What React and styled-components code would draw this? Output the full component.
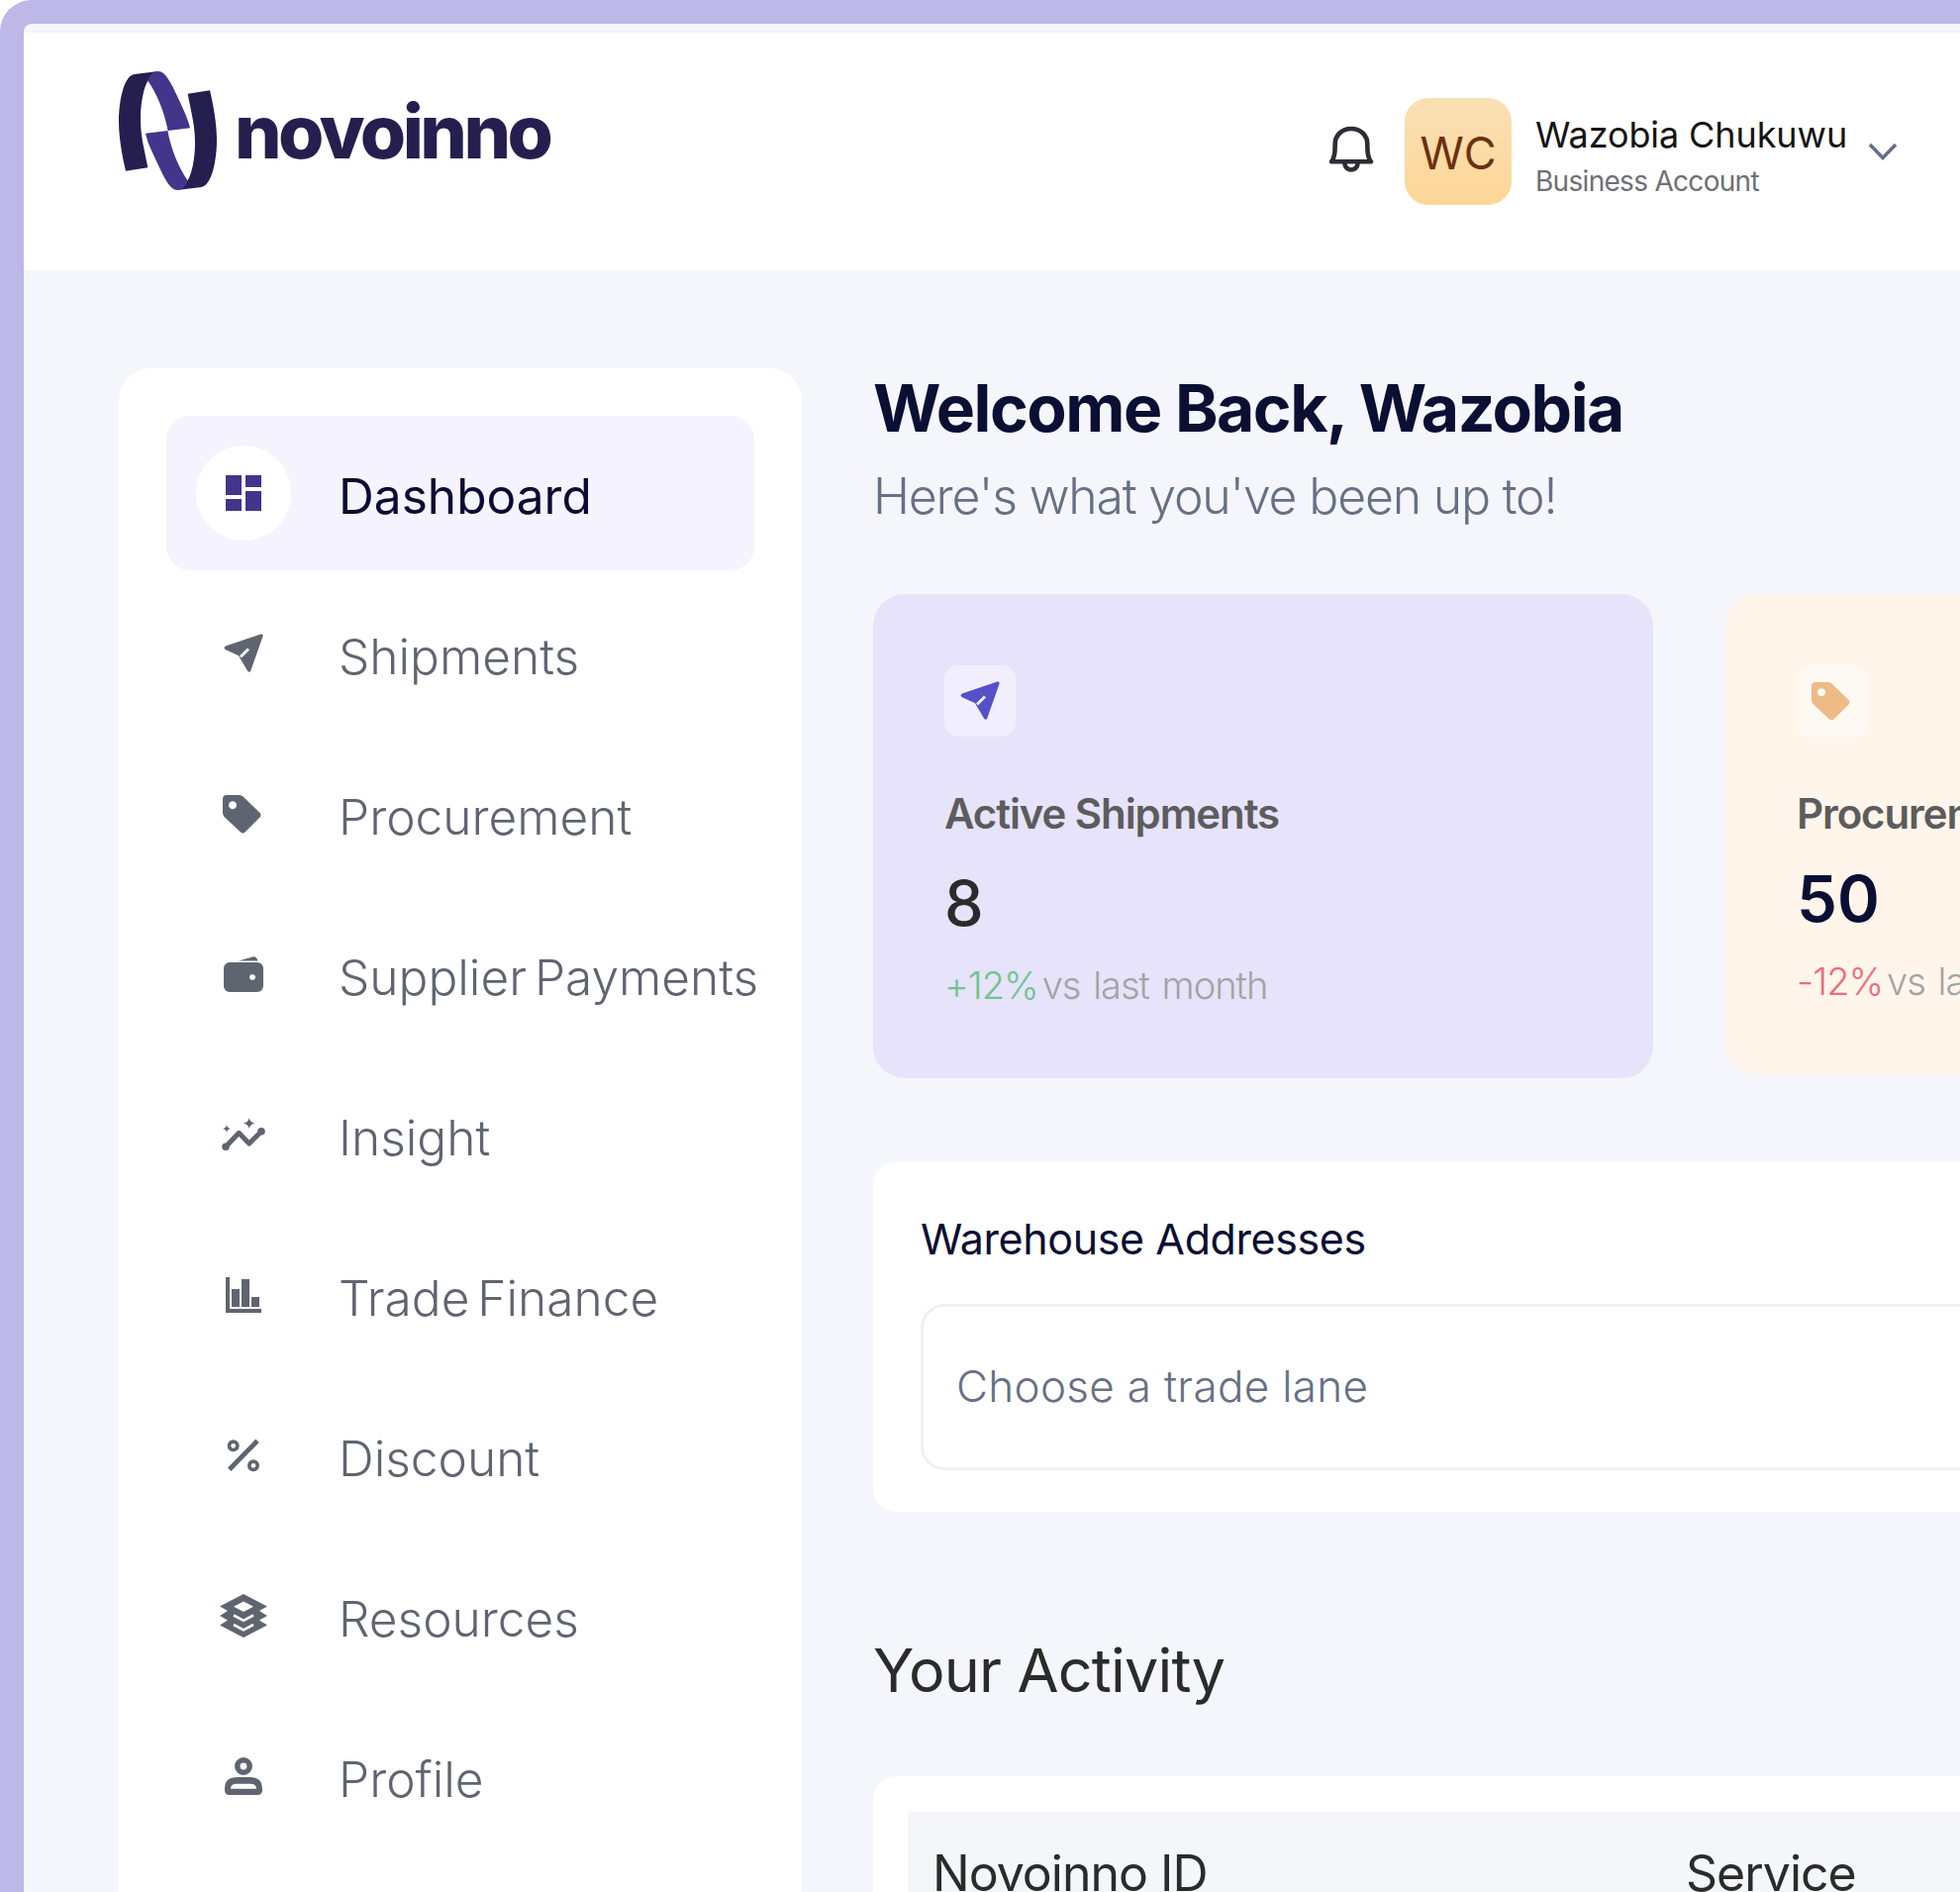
import React from "react";
import styled, { createGlobalStyle } from "styled-components";

const GlobalStyle = createGlobalStyle`
  html, body {
    margin: 0;
    padding: 0;
    background: #fff;
  }
  * { box-sizing: border-box; }
  body {
    font-family: Inter, "Noto Sans", "Liberation Sans", sans-serif;
  }
`;

const Frame = styled.div`
  width: 1980px;
  height: 1911px;
  overflow: hidden;
  background: #f4f6fb;
  border-top: 24px solid #bdb8e8;
  border-left: 24px solid #bdb8e8;
  border-top-left-radius: 32px;
  padding-top: 9px;
`;

const Header = styled.header`
  height: 240px;
  background: #fff;
  display: flex;
  align-items: flex-start;
  justify-content: space-between;
  padding: 39px 63px 0 96px;
`;

const Logo = styled.div`
  display: flex;
  align-items: flex-start;
  gap: 18px;
`;

const LogoText = styled.span`
  font-size: 75px;
  font-weight: 800;
  line-height: 64px;
  margin-top: 29px;
  letter-spacing: -3.6px;
  color: #241f4f;
`;

const Account = styled.div`
  display: flex;
  align-items: center;
  margin-top: 27px;
`;

const BellWrap = styled.span`
  display: flex;
  margin: 0 31px 4px 0;
`;

const Avatar = styled.div`
  width: 108px;
  height: 108px;
  border-radius: 24px;
  background: linear-gradient(180deg, #fae0b4 0%, #fcd697 100%);
  color: #6b300e;
  font-size: 45px;
  font-weight: 400;
  display: flex;
  align-items: center;
  justify-content: center;
  padding-top: 2px;
  margin-right: 24px;
`;

const AccountText = styled.div`
  display: flex;
  flex-direction: column;
  width: 336px;
  padding-top: 7px;
`;

const AccountName = styled.span`
  font-size: 36px;
  line-height: 50px;
  color: #141414;
  letter-spacing: -0.1px;
`;

const AccountRole = styled.span`
  font-size: 28px;
  line-height: 40px;
  margin-top: 2px;
  color: #6d7075;
  letter-spacing: -0.7px;
`;

const Body = styled.div`
  display: flex;
  align-items: flex-start;
  gap: 72px;
  padding: 99px 0 0 96px;
`;

const Sidebar = styled.aside`
  flex: none;
  width: 690px;
  height: 1600px;
  background: #fff;
  border-radius: 32px;
  padding: 48px;
  display: flex;
  flex-direction: column;
  gap: 6px;
`;

const NavItem = styled.div`
  height: 156px;
  width: 594px;
  flex: none;
  border-radius: 24px;
  background: ${(p) => (p.$active ? "#f4f3fe" : "transparent")};
  display: flex;
  align-items: center;
  padding-left: 30px;
  gap: 48px;
  white-space: nowrap;
`;

const NavIcon = styled.span`
  width: 96px;
  height: 96px;
  flex: none;
  border-radius: 50%;
  background: ${(p) => (p.$active ? "#fff" : "transparent")};
  display: flex;
  align-items: center;
  justify-content: center;
`;

const NavLabel = styled.span`
  font-size: 49.6px;
  line-height: 60px;
  font-weight: ${(p) => (p.$active ? 400 : 300)};
  color: ${(p) => (p.$active ? "#0a0c33" : "#5f6570")};
  word-spacing: -6px;
  margin-top: 6px;
`;

const Main = styled.main`
  flex: none;
  width: 1700px;
`;

const Title = styled.h1`
  margin: 0;
  font-size: 66px;
  line-height: 80px;
  font-weight: 700;
  color: #0a0f33;
  letter-spacing: -1.5px;
`;

const Subtitle = styled.p`
  margin: 19px 0 0;
  font-size: 50px;
  line-height: 60px;
  font-weight: 300;
  color: #667085;
  letter-spacing: -1.2px;
`;

const Cards = styled.div`
  display: grid;
  grid-template-columns: 788px 787px;
  gap: 73px;
  align-items: start;
  margin-top: 69px;
`;

const StatCard = styled.section`
  border-radius: 32px;
  padding: 72px 72px;
  background: ${(p) => p.$bg};
`;

const IconBox = styled.div`
  width: 72px;
  height: 72px;
  border-radius: 14px;
  background: ${(p) => p.$bg};
  display: flex;
  align-items: center;
  justify-content: center;
`;

const StatTitle = styled.div`
  margin-top: 50px;
  font-size: 42px;
  line-height: 56px;
  font-weight: 600;
  color: #5c5c5c;
  letter-spacing: -1.1px;
  white-space: nowrap;
`;

const StatValue = styled.div`
  margin-top: 22px;
  margin-bottom: ${(p) => p.$mb}px;
  font-size: ${(p) => p.$size}px;
  line-height: ${(p) => p.$lh}px;
  font-weight: ${(p) => p.$weight};
  color: ${(p) => p.$color};
`;

const StatDelta = styled.div`
  display: flex;
  gap: 4px;
  font-size: 38px;
  line-height: 44px;
  font-weight: 300;
  color: #a3a3a3;
  letter-spacing: -1px;
  word-spacing: 3px;
  white-space: nowrap;
`;

const DeltaPct = styled.span`
  color: ${(p) => p.$color};
`;

const WarehouseCard = styled.section`
  margin-top: 84px;
  height: 354px;
  background: #fff;
  border-radius: 24px;
  padding: 52px 48px 0;
`;

const WarehouseTitle = styled.div`
  font-size: 43px;
  line-height: 52px;
  color: #0a0f33;
  letter-spacing: -0.4px;
`;

const TradeSelect = styled.div`
  margin-top: 40px;
  height: 168px;
  border: 3px solid #f0f1f7;
  border-radius: 24px;
  display: flex;
  align-items: center;
  padding: 0 0 2px 33px;
  font-size: 44px;
  font-weight: 350;
  letter-spacing: 0.3px;
  color: #667085;
`;

const SectionTitle = styled.h2`
  margin: 123px 0 0;
  font-size: 61px;
  line-height: 74px;
  font-weight: 400;
  color: #2b2b2b;
  letter-spacing: -0.8px;
`;

const TableCard = styled.section`
  margin-top: 70px;
  height: 300px;
  background: #fff;
  border-radius: 24px;
  padding: 36px 35px;
`;

const TableHead = styled.div`
  background: #f5f6fa;
  height: 200px;
  display: grid;
  grid-template-columns: 761px 1fr;
  padding: 32px 25px;
  font-size: 50px;
  line-height: 60px;
  letter-spacing: -1px;
  color: #2b2b2b;
`;

const TagSvg = styled.svg`
  margin-right: 4px;
`;

const Plane = ({ color }) => (
  <svg width="40" height="40" viewBox="0 0 40 40">
    <path
      fillRule="evenodd"
      fill={color}
      d="M37.5.6 2 12.4Q-.6 14 1.5 16l13.5 6.3L24 37.6q1.8 2.4 3.3 0L39.6 2.6Q40 0 37.5.6ZM16 22.5l8-8 2 2-8 8Z"
    />
  </svg>
);

const Tag = ({ color }) => (
  <TagSvg width="39" height="39" viewBox="0 0 39 39">
    <path
      fillRule="evenodd"
      fill={color}
      d="M4 0H17q2 0 3.500 1.500L37.500 18q2 2.400 0 4.500L22.500 37.500q-2 2-4.500 0L1.500 22Q0 20.500 0 18V4Q0 0 4 0ZM10 6.300a4 4 0 1 0 .01 0Z"
    />
  </TagSvg>
);

const GRAY = "#5f6570";

const DashboardIcon = () => (
  <svg width="36" height="36" viewBox="0 0 36 36" fill="#41368c">
    <rect x="0" y="0" width="16" height="20" />
    <rect x="0" y="24" width="16" height="12" />
    <rect x="20" y="0" width="16" height="12" />
    <rect x="20" y="16" width="16" height="20" />
  </svg>
);

const WalletIcon = () => (
  <svg width="40" height="36" viewBox="0 0 40 36">
    <path
      fillRule="evenodd"
      fill={GRAY}
      d="M6 6H34a6 6 0 0 1 6 6V30a6 6 0 0 1-6 6H6a6 6 0 0 1-6-6V12a6 6 0 0 1 6-6ZM29 18a3 3 0 1 0 .01 0Z"
    />
    <path fill={GRAY} d="M15 4.500 30 .3Q33 0 34.500 4.500Z" />
  </svg>
);

const InsightIcon = () => (
  <svg width="44" height="34" viewBox="0 0 44 34" fill={GRAY}>
    <path
      d="M4 29.300 17.300 15.300 27.700 26 40 13.700"
      fill="none"
      stroke={GRAY}
      strokeWidth="5"
      strokeLinecap="round"
      strokeLinejoin="round"
    />
    <circle cx="4" cy="29.300" r="3.800" />
    <circle cx="40" cy="13.700" r="3.800" />
    <path d="M27.700 0Q28.500 4.500 33.500 5.500 28.500 6.500 27.700 11 26.900 6.500 22 5.500 26.900 4.500 27.700 0Z" />
    <path d="M5 7Q5.500 10.500 9 11 5.500 11.500 5 15 4.500 11.500 1 11 4.500 10.500 5 7Z" />
  </svg>
);

const TradeIcon = () => (
  <svg width="36" height="36" viewBox="0 0 36 36" fill={GRAY}>
    <rect x="0" y="0" width="4" height="36" />
    <rect x="0" y="32" width="36" height="4" />
    <rect x="6" y="12" width="8" height="18" />
    <rect x="16" y="2" width="8" height="28" />
    <rect x="26" y="20" width="8" height="10" />
  </svg>
);

const PercentIcon = () => (
  <svg width="34" height="34" viewBox="0 0 34 34" fill="none" stroke={GRAY}>
    <circle cx="6.700" cy="7.300" r="4.200" strokeWidth="3.600" />
    <circle cx="27" cy="27.300" r="4.200" strokeWidth="3.600" />
    <path d="M31 2.300 2.700 31.300" strokeWidth="4.800" />
  </svg>
);

const LayersIcon = () => (
  <svg width="48" height="44" viewBox="0 0 48 44">
    <path
      fillRule="evenodd"
      fill={GRAY}
      d="M24 0 48 12.500 40 17 48 22 40 26.500 48 31.500 24 44 0 31.500 8 26.500 0 22 8 17 0 12.500ZM24 7.500 14 12.700 24 18 34 12.700Z"
    />
    <path
      d="M14 21.500 24 26.800 34 21.500M14 31 24 36.300 34 31"
      fill="none"
      stroke="#fff"
      strokeWidth="2.600"
    />
  </svg>
);

const ProfileIcon = () => (
  <svg width="38" height="38" viewBox="0 0 38 38">
    <circle cx="19" cy="9" r="6.200" fill="none" stroke={GRAY} strokeWidth="5.500" />
    <path
      fillRule="evenodd"
      fill={GRAY}
      d="M0 31Q0 20 13 20H25Q38 20 38 31V33Q38 38 33 38H5Q0 38 0 33ZM6 31.700H32Q32 26.700 26 26.700H12Q6 26.700 6 31.700Z"
    />
  </svg>
);

const LogoHalf = () => (
  <>
    <path
      fill="#241f4f"
      d="M40 0 15.500 3C5 5 0 30 0 51 0 68 4 88 7 100.700L29.400 97.300C25 75 22 65 22 48 22 32 25 17 29.400 9.700Z"
    />
    <path
      fill="#41368c"
      d="M40 0C47 0 53 12 59 25 65 38 70 48 72 57.300L49.600 60C46 40 38 22 29.400 9.700 31 4 35 0 40 0Z"
    />
  </>
);

const navItems = [
  { label: "Dashboard", icon: <DashboardIcon />, active: true },
  { label: "Shipments", icon: <Plane color={GRAY} /> },
  { label: "Procurement", icon: <Tag color={GRAY} /> },
  { label: "Supplier Payments", icon: <WalletIcon /> },
  { label: "Insight", icon: <InsightIcon /> },
  { label: "Trade Finance", icon: <TradeIcon /> },
  { label: "Discount", icon: <PercentIcon /> },
  { label: "Resources", icon: <LayersIcon /> },
  { label: "Profile", icon: <ProfileIcon /> },
];

const App = () => {
  return (
    <>
      <GlobalStyle />
      <Frame>
        <Header>
          <Logo>
            <svg width="99" height="120" viewBox="0 0 99 120">
              <LogoHalf />
              <g transform="rotate(180 49.500 60)">
                <LogoHalf />
              </g>
            </svg>
            <LogoText>novoinno</LogoText>
          </Logo>
          <Account>
            <BellWrap>
              <svg
                width="46"
                height="49"
                viewBox="0 0 45 47"
                fill="none"
                stroke="#2b2e35"
                strokeWidth="4.500"
                strokeLinejoin="round"
                strokeLinecap="round"
              >
                <path d="M3 35C7 30 6.500 24 6.500 18 6.500 9 13 2.500 22.500 2.500 32 2.500 38.500 9 38.500 18 38.500 24 38 30 42 35Z" />
                <path d="M16 37C17 45 28 45 29 37" />
              </svg>
            </BellWrap>
            <Avatar>WC</Avatar>
            <AccountText>
              <AccountName>Wazobia Chukuwu</AccountName>
              <AccountRole>Business Account</AccountRole>
            </AccountText>
            <svg width="30" height="18" viewBox="0 0 30 18" fill="none" stroke="#667085" strokeWidth="3.500">
              <path d="M2 2 15 15.500 28 2" />
            </svg>
          </Account>
        </Header>
        <Body>
          <Sidebar>
            {navItems.map((item) => (
              <NavItem key={item.label} $active={item.active}>
                <NavIcon $active={item.active}>{item.icon}</NavIcon>
                <NavLabel $active={item.active}>{item.label}</NavLabel>
              </NavItem>
            ))}
          </Sidebar>
          <Main>
            <Title>Welcome Back, Wazobia</Title>
            <Subtitle>Here's what you've been up to!</Subtitle>
            <Cards>
              <StatCard $bg="#e6e3fb">
                <IconBox $bg="#f1effd">
                  <Plane color="#5650c9" />
                </IconBox>
                <StatTitle>Active Shipments</StatTitle>
                <StatValue $size={63} $weight={500} $lh={80} $mb={21} $color="#2b2b2b">
                  8
                </StatValue>
                <StatDelta>
                  <DeltaPct $color="#6fc48c">+12%</DeltaPct>
                  <span>vs last month</span>
                </StatDelta>
              </StatCard>
              <StatCard $bg="#fff5eb">
                <IconBox $bg="#fff9f3">
                  <Tag color="#eeba85" />
                </IconBox>
                <StatTitle>Procurement</StatTitle>
                <StatValue $size={65} $weight={600} $lh={72} $mb={25} $color="#0a0f33">
                  50
                </StatValue>
                <StatDelta>
                  <DeltaPct $color="#ef6b7a">-12%</DeltaPct>
                  <span>vs last month</span>
                </StatDelta>
              </StatCard>
            </Cards>
            <WarehouseCard>
              <WarehouseTitle>Warehouse Addresses</WarehouseTitle>
              <TradeSelect>Choose a trade lane</TradeSelect>
            </WarehouseCard>
            <SectionTitle>Your Activity</SectionTitle>
            <TableCard>
              <TableHead>
                <span>Novoinno ID</span>
                <span>Service</span>
              </TableHead>
            </TableCard>
          </Main>
        </Body>
      </Frame>
    </>
  );
};

export default App;
